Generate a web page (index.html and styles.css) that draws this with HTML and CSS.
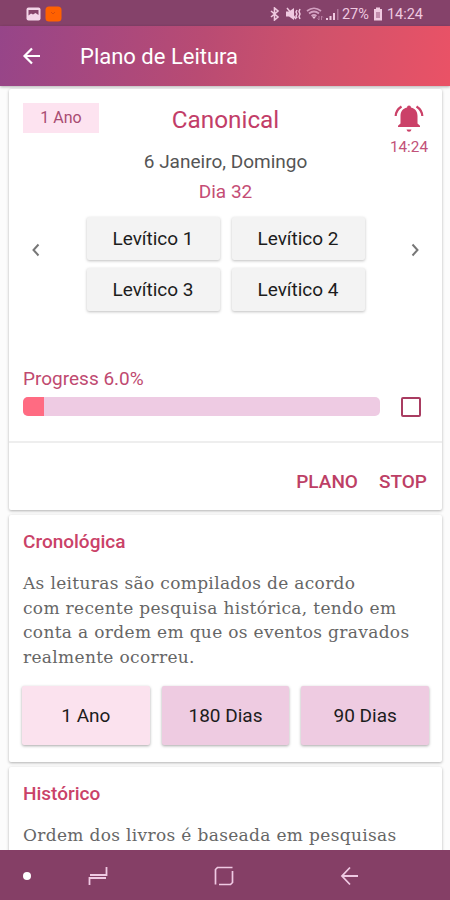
FILE: index.html
```html
<!DOCTYPE html>
<html lang="pt">
<head>
  <meta charset="UTF-8">
  <meta name="viewport" content="width=device-width, initial-scale=1">
  <title>Plano de Leitura</title>
  <link rel="stylesheet" href="styles.css">
</head>
<body>

  <div class="status-bar">
    <div class="status-left">
      <svg width="15" height="14" viewBox="0 0 15 14"><rect x="0.5" y="0.5" width="14" height="13" rx="2" fill="#f3d5e8"/><path d="M2.500 3h10v5l-3-2-2.500 1.500-2-1-2.500 2z" fill="#85436a"/></svg>
      <svg width="17" height="16" viewBox="0 0 17 16"><rect x="0.500" y="0.500" width="16" height="15" rx="3.500" fill="#ff6100"/><path d="M6 6l2 2 2-2" fill="none" stroke="#d94c0c"/></svg>
    </div>
    <div class="status-right">
      <svg class="bluetooth" width="10" height="14" viewBox="0 0 10 14"><path d="M1 4l7 6-3.500 3V1L8 4l-7 6" fill="none" stroke="#efc9e0" stroke-width="1.600"/></svg>
      <svg class="mute" width="17" height="14" viewBox="0 0 17 14"><path d="M1 4.500h3L9 1v12L4 9.500H1z" fill="#efc9e0"/><path d="M2 1l9 11M12 3l-1 2 1 2-1 2 1 2M15 2l-1 2.500 1 2.500-1 2.500 1 2.500" fill="none" stroke="#efc9e0" stroke-width="1.500"/></svg>
      <svg class="wifi" width="18" height="14" viewBox="0 0 18 14"><path d="M1 4q7-5.500 14 0M3 6.500q5-4 10 0M5.500 9q2.500-2 5 0" fill="none" stroke="#d3a0c1" stroke-width="1.700"/><path d="M6 9.500h4L8 12z" fill="#efc9e0"/><path d="M13 9v4l-1.500-1.500M15.500 13V9l1.500 1.500" fill="none" stroke="#b77ba0" stroke-width="1"/></svg>
      <svg class="signal" width="15" height="14" viewBox="0 0 15 14"><path d="M1 11h2v2H1zM4.500 9h2v4h-2zM8 6h2v7H8z" fill="#efc9e0"/><path d="M12 2h1.500v11H12z" fill="#ae7598"/></svg>
      <span class="percent">27%</span>
      <svg class="battery" width="10" height="14" viewBox="0 0 10 14"><path d="M3 0.500h4V2h2v11.500H1V2h2z" fill="#efc9e0"/><path d="M3 5h4v6H3z" fill="#c28dad"/></svg>
      <span>14:24</span>
    </div>
  </div>

  <div class="app-bar">
    <svg width="20" height="18" viewBox="0 0 20 18"><path d="M18 9H3M10 1.500L2.500 9l7.500 7.500" fill="none" stroke="#fff" stroke-width="2.200"/></svg>
    <h1>Plano de Leitura</h1>
  </div>

  <div class="content">
    <div class="card current">
      <div class="current-header">
        <span class="badge">1 Ano</span>
        <h2>Canonical</h2>
        <div class="alarm">
          <svg width="30" height="28" viewBox="0 0 30 28"><path d="M15 0.500a2 2 0 0 1 2 2c4.500 1 6.500 4.300 6.500 8.500v7.500l2.500 2.300V22H4v-1.200l2.500-2.300V11c0-4.200 2-7.500 6.500-8.500a2 2 0 0 1 2-2z" fill="#cb4168"/><path d="M12.500 24.500h5q-.5 2.300-2.500 2.300t-2.500-2.300z" fill="#cb4168"/><path d="M7.500 1.500Q2 5 1.700 11M22.500 1.500Q28 5 28.300 11" fill="none" stroke="#cb4168" stroke-width="2.200"/></svg>
          <span>14:24</span>
        </div>
      </div>
      <p class="date">6 Janeiro, Domingo</p>
      <p class="day">Dia 32</p>
      <div class="chapters">
        <svg width="10" height="14" viewBox="0 0 10 14"><path d="M7.500 1.500L2.500 7l5 5.500" fill="none" stroke="#777" stroke-width="2"/></svg>
        <div class="chapter-grid">
          <button>Levítico 1</button>
          <button>Levítico 2</button>
          <button>Levítico 3</button>
          <button>Levítico 4</button>
        </div>
        <svg width="10" height="14" viewBox="0 0 10 14"><path d="M2.500 1.500l5 5.500-5 5.500" fill="none" stroke="#777" stroke-width="2"/></svg>
      </div>
      <p class="progress-label">Progress 6.0%</p>
      <div class="progress-row">
        <div class="progress"><div class="progress-fill" style="width: 6%"></div></div>
        <span class="checkbox"></span>
      </div>
      <div class="actions">
        <a>PLANO</a>
        <a>STOP</a>
      </div>
    </div>

    <div class="card plan">
      <h3>Cronológica</h3>
      <p class="text">As leituras são compilados de acordo<br>com recente pesquisa histórica, tendo em<br>conta a ordem em que os eventos gravados<br>realmente ocorreu.</p>
      <div class="durations">
        <button class="light">1 Ano</button>
        <button>180 Dias</button>
        <button>90 Dias</button>
      </div>
    </div>

    <div class="card plan">
      <h3>Histórico</h3>
      <p class="text">Ordem dos livros é baseada em pesquisas</p>
    </div>
  </div>

  <div class="nav-bar">
    <span class="dot"></span>
    <svg class="recents" width="20" height="20" viewBox="0 0 20 20"><path d="M18.500 1v8H2M1.500 19v-7H18" fill="none" stroke="#efc9e3" stroke-width="1.800"/></svg>
    <svg class="home" width="20" height="20" viewBox="0 0 20 20"><path d="M18.500 1.500H3.500l-2 2v15M5 18.500h11.500l2-2V5" fill="none" stroke="#efc9e3" stroke-width="1.700"/></svg>
    <svg class="back" width="20" height="20" viewBox="0 0 20 20"><path d="M18 10H2M10 1.500L2 10l8 8.500" fill="none" stroke="#efc9e3" stroke-width="1.800"/></svg>
  </div>

</body>
</html>
```
FILE: styles.css
```css
* {
  margin: 0;
  padding: 0;
  box-sizing: border-box;
}

body {
  height: 900px;
  display: flex;
  flex-direction: column;
  overflow: hidden;
  background: #fcfcfc;
  font-family: Roboto, sans-serif;
}

svg {
  display: block;
  flex-shrink: 0;
}

button {
  border: none;
  font-family: inherit;
  color: #1c1c1c;
}

.status-bar {
  height: 26px;
  flex-shrink: 0;
  display: flex;
  justify-content: space-between;
  align-items: center;
  padding: 2px 27px 0 26px;
  background: #85426a;
}

.status-left,
.status-right {
  display: flex;
  align-items: center;
}

.status-left {
  gap: 4px;
}

.status-right {
  color: #efc9e0;
  font-size: 14.5px;
  line-height: 24px;
}

.status-right span {
  padding-top: 1px;
}

.mute {
  margin-left: 5px;
}

.wifi {
  margin-left: 4px;
}

.signal {
  margin-left: 1px;
}

.percent {
  margin-left: 2px;
}

.battery {
  margin: 0 4px;
}

.app-bar {
  height: 60px;
  flex-shrink: 0;
  display: flex;
  align-items: center;
  gap: 38px;
  padding-left: 22px;
  background: linear-gradient(100deg, #964589, #b94b73 45%, #d0526b 70%, #ea5266);
  box-shadow: 0 1px 3px rgba(0,0,0,0.3);
}

.app-bar h1 {
  color: #fff;
  font-size: 22px;
  font-weight: 400;
}

.content {
  flex: 1;
  overflow: hidden;
  padding: 3px 8px 0 9px;
}

.card {
  background: #fff;
  border-radius: 2px;
  margin-bottom: 5px;
  box-shadow: 0 1px 3px rgba(0,0,0,0.3);
}

.current {
  height: 421px;
  padding-top: 14px;
  text-align: center;
}

.current-header {
  height: 47px;
  display: grid;
  grid-template-columns: 76px 1fr 76px;
  align-items: start;
  padding: 0 14px;
}

.badge {
  background: #fde3f0;
  color: #a94c72;
  font-size: 16px;
  line-height: 30px;
}

.current h2 {
  color: #c23d68;
  font-size: 24.3px;
  font-weight: 400;
  line-height: 33px;
}

.alarm {
  justify-self: end;
  display: flex;
  flex-direction: column;
  align-items: center;
  gap: 5px;
  padding-top: 2px;
  color: #c25279;
  font-size: 15.3px;
  line-height: 18px;
}

.date {
  height: 30px;
  color: #555;
  font-size: 19px;
}

.day {
  height: 37px;
  color: #c54d75;
  font-size: 19px;
}

.chapters {
  height: 150px;
  display: flex;
  align-items: flex-start;
  justify-content: space-between;
  padding: 0 22px;
}

.chapters > svg {
  margin-top: 26px;
}

.chapter-grid {
  display: grid;
  grid-template-columns: 133px 133px;
  gap: 8px 12px;
}

.chapter-grid button {
  height: 43px;
  background: #f3f3f3;
  border-radius: 2px;
  box-shadow: 0 1px 3px rgba(0,0,0,0.25);
  font-size: 19px;
}

.progress-label {
  height: 30px;
  padding-left: 14px;
  text-align: left;
  color: #c04a70;
  font-size: 19px;
}

.progress-row {
  height: 46px;
  display: flex;
  align-items: flex-start;
  justify-content: space-between;
  padding: 0 21px 0 14px;
  border-bottom: 2px solid #eee;
}

.progress {
  width: 357px;
  height: 19px;
  overflow: hidden;
  border-radius: 5px;
  background: #eecbe3;
}

.progress-fill {
  height: 100%;
  background: #ff6b82;
}

.checkbox {
  width: 20px;
  height: 20px;
  border: 2px solid #a93c61;
  border-radius: 2px;
}

.actions {
  display: flex;
  justify-content: flex-end;
  gap: 21px;
  padding: 27px 15px 0 0;
  color: #bd3f66;
  font-size: 19px;
  font-weight: 500;
}

.plan {
  padding: 16px 13px 17px;
}

.plan h3 {
  padding-left: 1px;
  color: #ca4268;
  font-size: 19px;
  font-weight: 500;
  line-height: 22px;
}

.text {
  padding: 18px 0 17px 1px;
  color: #666;
  font-family: "Roboto Slab", "DejaVu Serif", serif;
  font-size: 17px;
  letter-spacing: 0.33px;
  line-height: 24.5px;
  white-space: nowrap;
}

.durations {
  display: flex;
  gap: 12px;
}

.durations button {
  flex: 1;
  height: 59px;
  background: #eecbe1;
  border-radius: 2px;
  box-shadow: 0 1px 3px rgba(0,0,0,0.35);
  font-size: 19px;
}

.durations .light {
  background: #fbe2ee;
}

.nav-bar {
  height: 50px;
  flex-shrink: 0;
  display: flex;
  align-items: center;
  padding: 1px 0 0 23px;
  background: #853f66;
}

.dot {
  width: 8px;
  height: 8px;
  border-radius: 50%;
  background: #fff;
}

.recents {
  margin-left: 57px;
}

.home {
  margin-left: 106px;
}

.back {
  margin-left: 106px;
}
```
